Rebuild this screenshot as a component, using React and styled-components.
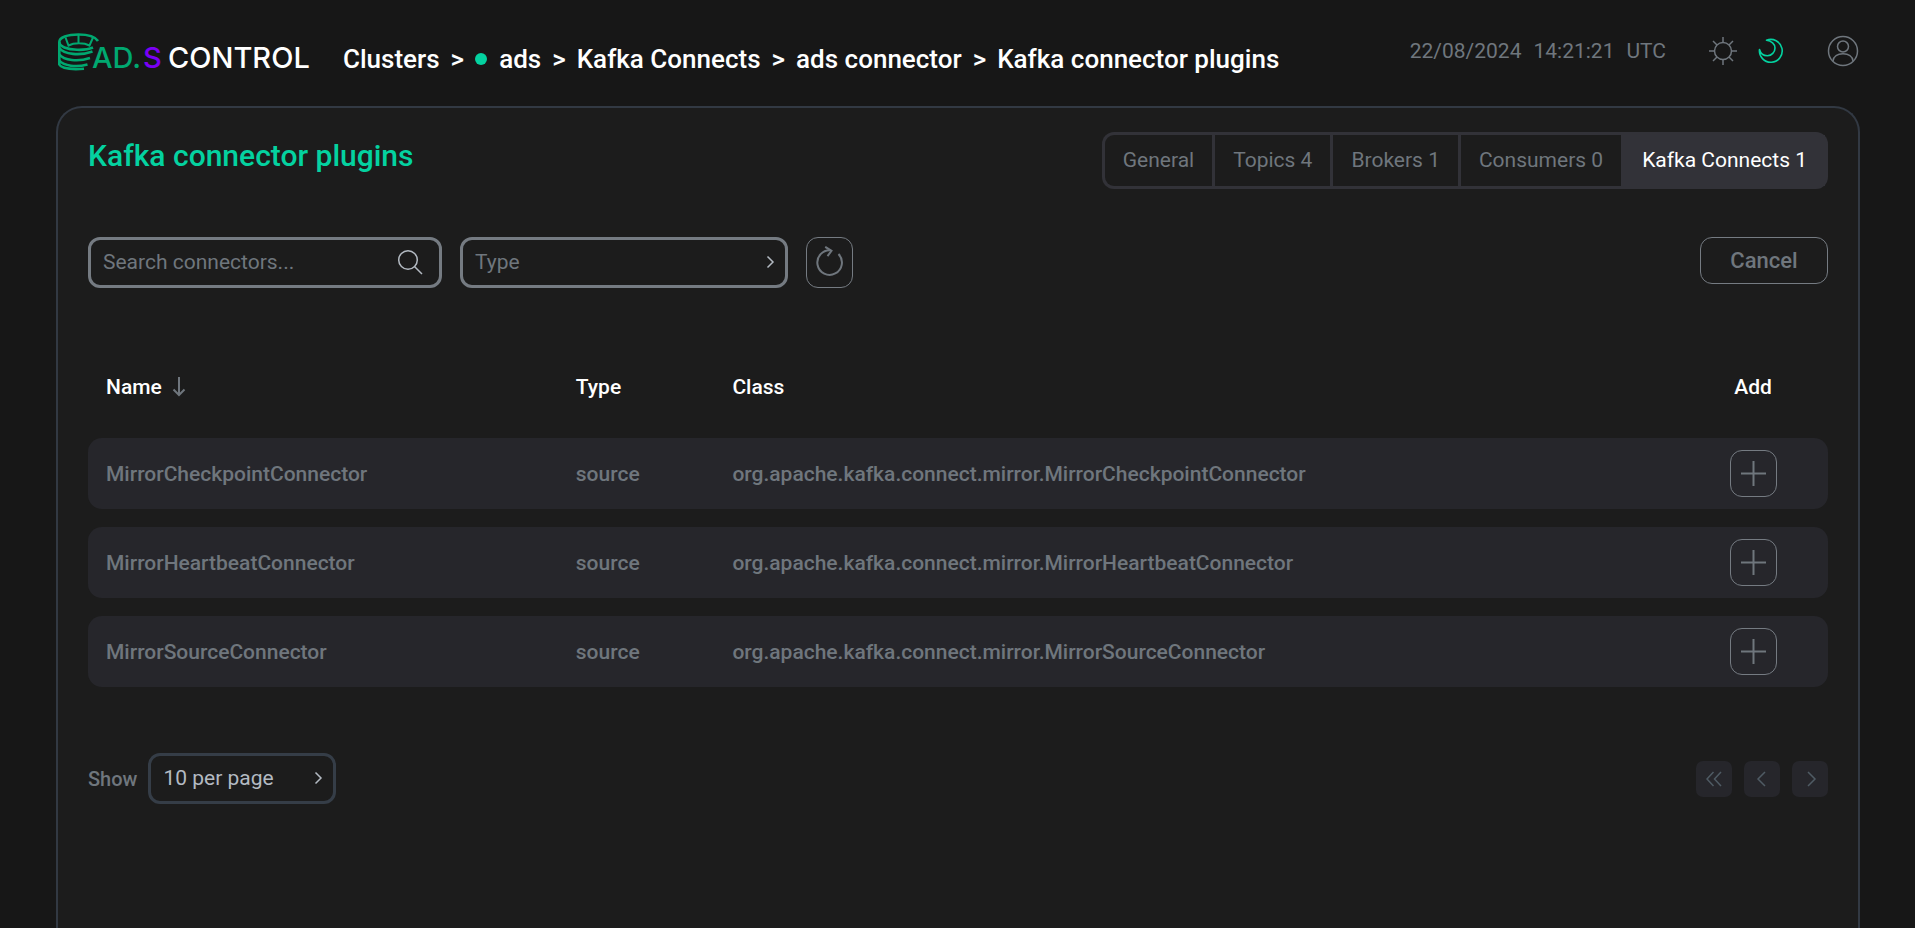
import React from "react";
import styled, { createGlobalStyle, css } from "styled-components";

const color = {
  page: "#171717",
  panel: "#1c1c1c",
  row: "#26262b",
  tab: "#323238",
  outline: "#323943",
  field: "#757b82",
  muted: "#6f767d",
  light: "#b3bac2",
  accent: "#04d2a0",
};

const GlobalStyle = createGlobalStyle`
  *, *::before, *::after { box-sizing: border-box; }
  html, body { margin: 0; background: ${color.page}; }
  body, button, input, select {
    font-family: Roboto, "Liberation Sans", sans-serif;
    font-size: 21px;
    line-height: 24px;
  }
  svg { display: block; flex: none; }
`;

const Page = styled.div`
  min-height: 100vh;
  display: flex;
  flex-direction: column;
  padding: 0 55px 0 56px;
  color: #fff;
`;

const Header = styled.header`
  height: 106px;
  display: flex;
  align-items: flex-start;
  padding-top: 30px;
`;

const LogoLink = styled.a`
  margin-right: 32px;
`;

const Breadcrumbs = styled.nav`
  flex: 1;
  display: flex;
  align-items: center;
  gap: 11px;
  height: 58px;
  font-size: 26px;
  font-weight: 500;
  white-space: nowrap;
`;

const Crumb = styled.a`
  display: flex;
  align-items: center;
  gap: 12px;
  color: #fff;
  text-decoration: none;
`;

const StatusDot = styled.span`
  width: 12px;
  height: 12px;
  border-radius: 50%;
  background: ${color.accent};
`;

const HeaderTools = styled.div`
  display: flex;
  align-items: center;
  height: 42px;
  padding-right: 1px;
  color: ${color.muted};
`;

const Clock = styled.time`
  display: flex;
  margin-right: 43px;
  white-space: nowrap;
  gap: 12px;
`;

const IconButton = styled.button`
  display: flex;
  padding: 0;
  border: 0;
  background: none;
  color: ${(p) => (p.$active ? color.accent : color.muted)};
  margin-right: ${(p) => p.$gap || 0}px;
  cursor: pointer;
`;

const Panel = styled.main`
  flex: 1;
  padding: 24px 30px;
  background: ${color.panel};
  border: 2px solid ${color.outline};
  border-bottom: 0;
  border-radius: 26px 26px 0 0;
`;

const TitleRow = styled.div`
  display: flex;
  justify-content: space-between;
  align-items: flex-start;
  margin-bottom: 48px;
`;

const Title = styled.h1`
  margin: 0;
  font-size: 30px;
  line-height: 48px;
  font-weight: 500;
  color: ${color.accent};
`;

const Tabs = styled.nav`
  display: flex;
  gap: 3px;
  height: 57px;
  padding: 3px;
  border-radius: 12px;
  background: ${color.tab};
`;

const Tab = styled.a`
  display: flex;
  align-items: center;
  padding: 0 18px 2px;
  background: ${(p) => (p.$active ? color.tab : color.panel)};
  color: ${(p) => (p.$active ? "#fff" : color.muted)};
  text-decoration: none;
  white-space: nowrap;
  &:first-child { border-radius: 9px 0 0 9px; }
`;

const Toolbar = styled.div`
  display: flex;
  align-items: flex-start;
  gap: 18px;
  margin-bottom: 48px;
`;

const fieldBox = css`
  height: 51px;
  border: 3px solid ${(p) => (p.$dark ? "#353d47" : color.field)};
  border-radius: 12px;
`;

const SearchBox = styled.div`
  ${fieldBox}
  width: 354px;
  display: flex;
  align-items: center;
  padding: 0 16px 2px 12px;
`;

const SearchInput = styled.input`
  flex: 1;
  min-width: 0;
  padding: 0;
  border: 0;
  outline: 0;
  background: none;
  color: ${color.light};
  &::placeholder { color: ${color.muted}; }
`;

const SelectBox = styled.div`
  position: relative;
  width: ${(p) => p.$width}px;
  svg {
    position: absolute;
    right: 13px;
    top: 18px;
    color: ${color.light};
    pointer-events: none;
  }
`;

const Select = styled.select`
  ${fieldBox}
  width: 100%;
  padding: 0 12px 2px;
  appearance: none;
  outline: 0;
  background: none;
  color: ${(p) => (p.$dark ? color.light : color.muted)};
`;

const OutlineButton = styled.button`
  display: flex;
  align-items: center;
  justify-content: center;
  width: ${(p) => p.$width || 47}px;
  height: ${(p) => p.$height || 47}px;
  margin-left: ${(p) => (p.$end ? "auto" : 0)};
  padding: 0;
  border: 1px solid ${color.field};
  border-radius: 12px;
  background: none;
  color: ${color.muted};
  font-size: 22px;
  font-weight: 500;
  cursor: pointer;
`;

const Table = styled.table`
  width: 100%;
  margin-bottom: 48px;
  table-layout: fixed;
  border-collapse: separate;
  border-spacing: 0 18px;
  font-weight: 500;
`;

const HeadCell = styled.th`
  width: ${(p) => p.$width || "auto"};
  height: 66px;
  padding: 0 18px;
  text-align: ${(p) => (p.$center ? "center" : "left")};
  font-weight: 500;
`;

const SortButton = styled.button`
  display: flex;
  align-items: center;
  gap: 10px;
  padding: 0;
  border: 0;
  background: none;
  color: #fff;
  font-weight: 500;
  cursor: pointer;
  svg { color: ${color.muted}; }
`;

const Cell = styled.td`
  height: 71px;
  padding: 0 18px;
  background: ${color.row};
  color: ${color.muted};
  &:first-child { border-radius: 14px 0 0 14px; }
  &:last-child { border-radius: 0 14px 14px 0; }
  ${OutlineButton} { margin: 0 auto; }
`;

const Footer = styled.footer`
  display: flex;
  align-items: center;
  gap: 11px;
`;

const ShowLabel = styled.label`
  color: ${color.muted};
  font-size: 20px;
  font-weight: 500;
`;

const Pager = styled.nav`
  display: flex;
  gap: 12px;
  margin-left: auto;
`;

const PageButton = styled.button`
  display: flex;
  align-items: center;
  justify-content: center;
  width: 36px;
  height: 36px;
  padding: 0;
  border: 0;
  border-radius: 7px;
  background: ${color.row};
  color: #4f5b64;
`;

const Logo = () => (
  <svg width="255" height="50" viewBox="0 0 255 50" role="img" aria-label="AD.S Control">
    <g fill="none" stroke="#00a870" strokeWidth="2.6">
      <path d="M42 11C39 6.500 31 4.500 22.500 4.500C11.500 4.500 3.300 7.500 3.300 12C3.300 16.500 11 19.500 21 19.800C27 20 33 19.200 37 17.500" />
      <path d="M3.300 12V34.500C5 38 14 39.800 28 38.800" />
      <path d="M3.300 18C8 24.500 24 26 36.500 21.500" />
      <path d="M3.300 24.500C8 30.500 22 32 34 28" />
      <path d="M3.300 30.500C8 36 20 37.500 31.500 34.500" />
      <path strokeWidth="2" d="M9.500 7.500L12.500 15.500C18 12.500 28 12.500 33.500 15.500L37 7.500M22.500 5V13" />
    </g>
    <g fontFamily="Inter, sans-serif" fontSize="29" fontWeight="500">
      <text x="36" y="38" fill="#00a870">AD.</text>
      <text x="87" y="38" fill="#7a00f5">S</text>
      <text x="112" y="38" fill="#fff">CONTROL</text>
    </g>
  </svg>
);

const SunIcon = () => (
  <svg width="28" height="28" viewBox="0 0 28 28" fill="none" stroke="currentColor" strokeWidth="1.500">
    <circle cx="14" cy="14" r="8.500" />
    <path d="M14 0V5.500M14 22.500V28M0 14H5.500M22.500 14H28M4 4L8 8M20 20L24 24M24 4L20 8M8 20L4 24" />
  </svg>
);

const MoonIcon = () => (
  <svg width="26" height="26" viewBox="0 0 26 26" fill="none" stroke="currentColor" strokeWidth="1.600" strokeLinejoin="round">
    <path d="M8.500 2.300A11.400 11.400 0 1 1 1.500 11.500C2.500 15.500 5.500 17.700 9.500 17.700A7.700 7.700 0 0 0 17 10C17 6 13.500 2.800 8.500 2.300Z" />
  </svg>
);

const UserIcon = () => (
  <svg width="32" height="32" viewBox="0 0 32 32" fill="none" stroke="currentColor" strokeWidth="1.500">
    <circle cx="16" cy="16" r="14.500" />
    <circle cx="16" cy="11.500" r="5.500" />
    <path d="M6 26C6.500 21.500 10.500 18.800 16 18.800S25.500 21.500 26 26" />
  </svg>
);

const SearchIcon = () => (
  <svg width="26" height="26" viewBox="0 0 26 26" fill="none" stroke={color.light} strokeWidth="1.500">
    <circle cx="11" cy="11" r="9.300" />
    <path d="M17.500 17.500L25 25" />
  </svg>
);

const ChevronIcon = () => (
  <svg width="9" height="15" viewBox="0 0 9 15" fill="none" stroke="currentColor" strokeWidth="1.500">
    <path d="M1.500 1.500L7 7L1.500 12.500" />
  </svg>
);

const RefreshIcon = () => (
  <svg width="31" height="33" viewBox="0 0 31 33" fill="none" stroke="currentColor" strokeWidth="2">
    <path d="M24.500 8A12.300 12.300 0 1 1 17 4.300" />
    <path d="M11.200 0.800L17.500 4.800L13.500 10.200" />
  </svg>
);

const SortIcon = () => (
  <svg width="14" height="20" viewBox="0 0 14 20" fill="none" stroke="currentColor" strokeWidth="2">
    <path d="M7 0V18M1.500 12.500L7 18L12.500 12.500" />
  </svg>
);

const PlusIcon = () => (
  <svg width="25" height="25" viewBox="0 0 25 25" fill="none" stroke="currentColor" strokeWidth="2">
    <path d="M12.500 0V25M0 12.500H25" />
  </svg>
);

const PagerIcon = ({ d }) => (
  <svg width="16" height="16" viewBox="0 0 16 16" fill="none" stroke="currentColor" strokeWidth="1.500">
    <path d={d} />
  </svg>
);

const crumbs = [
  { label: "Clusters" },
  { label: "ads", dot: true },
  { label: "Kafka Connects" },
  { label: "ads connector" },
  { label: "Kafka connector plugins" },
];

const tabs = ["General", "Topics 4", "Brokers 1", "Consumers 0", "Kafka Connects 1"];

const plugins = ["MirrorCheckpointConnector", "MirrorHeartbeatConnector", "MirrorSourceConnector"];

const pagerButtons = [
  { label: "First page", d: "M7.500 1L1 8L7.500 15M15 1L8.500 8L15 15" },
  { label: "Previous page", d: "M11 1L4 8L11 15" },
  { label: "Next page", d: "M6 1L13 8L6 15" },
];

export default function App() {
  return (
    <>
      <GlobalStyle />
      <Page>
        <Header>
          <LogoLink href="#"><Logo /></LogoLink>
          <Breadcrumbs aria-label="Breadcrumb">
            {crumbs.map((c, i) => (
              <React.Fragment key={c.label}>
                {i > 0 && <span>&gt;</span>}
                <Crumb href="#">{c.dot && <StatusDot />}{c.label}</Crumb>
              </React.Fragment>
            ))}
          </Breadcrumbs>
          <HeaderTools>
            <Clock><span>22/08/2024</span><span>14:21:21</span><span>UTC</span></Clock>
            <IconButton aria-label="Light theme" $gap={21}><SunIcon /></IconButton>
            <IconButton aria-label="Dark theme" $active $gap={43}><MoonIcon /></IconButton>
            <IconButton aria-label="Account"><UserIcon /></IconButton>
          </HeaderTools>
        </Header>
        <Panel>
          <TitleRow>
            <Title>Kafka connector plugins</Title>
            <Tabs>
              {tabs.map((t) => (
                <Tab key={t} href="#" $active={t === "Kafka Connects 1"}>{t}</Tab>
              ))}
            </Tabs>
          </TitleRow>
          <Toolbar>
            <SearchBox>
              <SearchInput type="text" aria-label="Search connectors" placeholder="Search connectors..." />
              <IconButton aria-label="Search"><SearchIcon /></IconButton>
            </SearchBox>
            <SelectBox $width={328}>
              <Select aria-label="Type"><option>Type</option></Select>
              <ChevronIcon />
            </SelectBox>
            <OutlineButton aria-label="Refresh" $height={51}><RefreshIcon /></OutlineButton>
            <OutlineButton $width={128} $end>Cancel</OutlineButton>
          </Toolbar>
          <Table>
            <thead>
              <tr>
                <HeadCell $width="27%"><SortButton>Name<SortIcon /></SortButton></HeadCell>
                <HeadCell $width="9%">Type</HeadCell>
                <HeadCell>Class</HeadCell>
                <HeadCell $width="150px" $center>Add</HeadCell>
              </tr>
            </thead>
            <tbody>
              {plugins.map((name) => (
                <tr key={name}>
                  <Cell>{name}</Cell>
                  <Cell>source</Cell>
                  <Cell>org.apache.kafka.connect.mirror.{name}</Cell>
                  <Cell><OutlineButton aria-label={`Add ${name}`}><PlusIcon /></OutlineButton></Cell>
                </tr>
              ))}
            </tbody>
          </Table>
          <Footer>
            <ShowLabel htmlFor="page-size">Show</ShowLabel>
            <SelectBox $width={188}>
              <Select id="page-size" $dark><option>10 per page</option></Select>
              <ChevronIcon />
            </SelectBox>
            <Pager aria-label="Pagination">
              {pagerButtons.map((b) => (
                <PageButton key={b.label} aria-label={b.label}><PagerIcon d={b.d} /></PageButton>
              ))}
            </Pager>
          </Footer>
        </Panel>
      </Page>
    </>
  );
}
